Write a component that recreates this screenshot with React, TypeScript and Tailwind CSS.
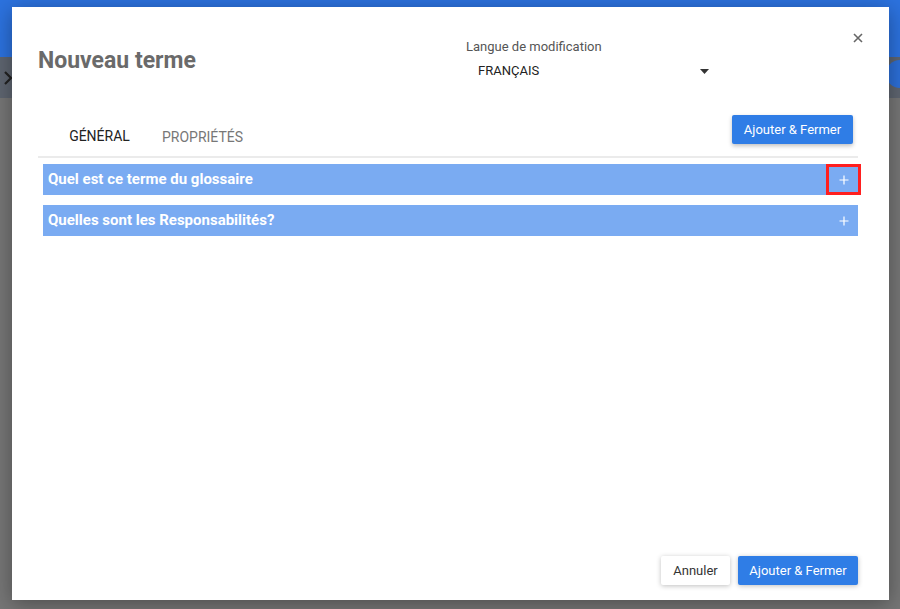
import React from "react";

function AccordionRow({ title, highlight }: { title: string; highlight?: boolean }) {
  return (
    <div className="flex h-[31px] items-center justify-between bg-[#7aabf2] pl-[5px] pr-[2px]">
      <span className="text-[15px] font-bold text-white">{title}</span>
      <span
        className={
          "flex h-[31px] w-[35px] items-center justify-center " +
          (highlight ? "border-[3px] border-[#ff1f1f] -mr-[5px]" : "-mr-[5px] border-[3px] border-transparent")
        }
      >
        <svg width="10" height="10" viewBox="0 0 10 10">
          <path d="M5 0.5V9.5M0.5 5H9.5" stroke="#ffffff" strokeWidth="1.2" />
        </svg>
      </span>
    </div>
  );
}

export default function App() {
  return (
    <div
      className="relative h-[609px] w-[900px] overflow-hidden bg-[#767676]"
      style={{ fontFamily: "Roboto, 'Liberation Sans', sans-serif" }}
    >
      {/* dimmed page behind the dialog */}
      <div className="h-[57px] bg-[#2c72de]" />
      <div className="relative flex h-[41px] items-center bg-[#5e6570] pl-[3px]">
        <svg width="10" height="16" viewBox="0 0 10 16">
          <path d="M2 2L8 8L2 14" stroke="#222" strokeWidth="2.2" fill="none" />
        </svg>
        <div className="absolute right-[-14px] top-[3px] h-[28px] w-[28px] rounded-full bg-[#2c6fd8]" />
      </div>

      {/* dialog */}
      <div className="absolute left-[12px] top-[7px] flex h-[593px] w-[877px] flex-col bg-white shadow-[0_4px_20px_rgba(0,0,0,0.35)]">
        <div className="relative flex items-start px-[26px] pt-[32px]">
          <h1 className="w-[428px] pt-[7px] text-[23px] font-bold leading-[30px] text-[#6a6a6a]">Nouveau terme</h1>
          <div className="flex flex-col">
            <span className="text-[13px] leading-[16px] text-[#555]">Langue de modification</span>
            <div className="mt-[8px] flex w-[243px] items-center justify-between pl-[12px]">
              <span className="text-[13px] leading-[16px] text-[#222]">FRANÇAIS</span>
              <svg width="9" height="5" viewBox="0 0 9 5">
                <path d="M0 0H9L4.5 5Z" fill="#333" />
              </svg>
            </div>
          </div>
          <button className="absolute right-[26px] top-[26px] text-[#666]">
            <svg width="10" height="10" viewBox="0 0 10 10">
              <path d="M1 1L9 9M9 1L1 9" stroke="#666" strokeWidth="1.6" />
            </svg>
          </button>
        </div>

        <div className="mt-[36px] flex items-end justify-between px-[26px]">
          <div className="flex">
            <div className="ml-[15px] flex h-[42px] w-[93px] items-center justify-center border-b-2 border-[#2f7be6] text-[14px] text-[#222]">
              GÉNÉRAL
            </div>
            <div className="ml-[16px] flex h-[42px] items-center text-[14px] text-[#777]">PROPRIÉTÉS</div>
          </div>
          <button className="mb-[14px] mr-[10px] h-[29px] w-[121px] rounded-[2px] bg-[#2f7de6] text-[13px] text-white shadow-[0_2px_4px_rgba(0,0,0,0.25)]">
            Ajouter &amp; Fermer
          </button>
        </div>
        <div className="mx-[26px] -mt-[2px] h-[2px] w-[820px] bg-[#ebebeb]" />

        <div className="ml-[31px] mt-[6px] flex w-[815px] flex-col gap-[10px]">
          <AccordionRow title="Quel est ce terme du glossaire" highlight />
          <AccordionRow title="Quelles sont les Responsabilités?" />
        </div>

        <div className="mt-auto flex justify-end gap-[8px] pb-[15px] pr-[31px]">
          <button className="h-[29px] w-[69px] rounded-[2px] bg-white text-[13px] text-[#333] shadow-[0_1px_5px_rgba(0,0,0,0.25)]">
            Annuler
          </button>
          <button className="h-[29px] w-[120px] rounded-[2px] bg-[#2f7de6] text-[13px] text-white shadow-[0_1px_5px_rgba(0,0,0,0.25)]">
            Ajouter &amp; Fermer
          </button>
        </div>
      </div>
    </div>
  );
}
